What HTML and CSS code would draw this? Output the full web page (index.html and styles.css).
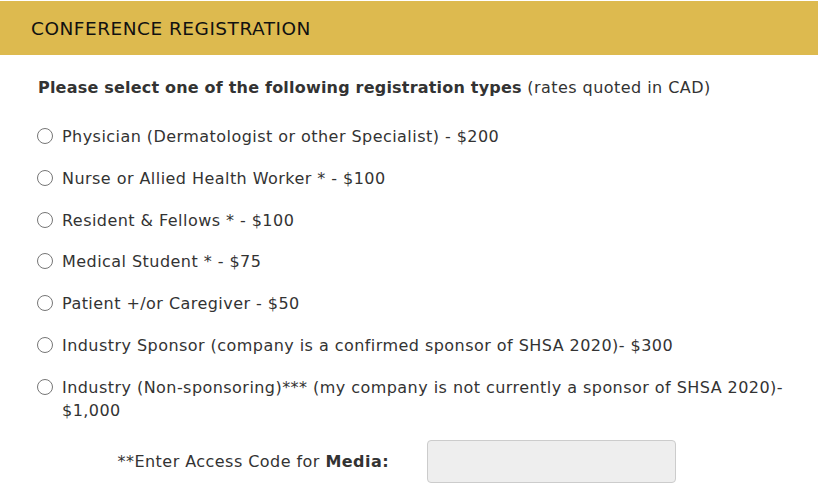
FILE: index.html
```html
<!DOCTYPE html>
<html lang="en">
<head>
    <meta charset="UTF-8">
    <meta name="viewport" content="width=device-width, initial-scale=1.0">
    <title>Conference Registration</title>
    <link rel="stylesheet" href="styles.css">
</head>
<body>
    <header class="panel-heading">
        <h2>CONFERENCE REGISTRATION</h2>
    </header>

    <div class="panel-body">
        <p class="intro"><strong>Please select one of the following registration types</strong> (rates quoted in CAD)</p>

        <!-- Registration types -->
        <div class="radio-list">
            <label class="radio-item"><input type="radio" name="regtype" value="physician"><span>Physician (Dermatologist or other Specialist) - $200</span></label>
            <label class="radio-item"><input type="radio" name="regtype" value="nurse"><span>Nurse or Allied Health Worker * - $100</span></label>
            <label class="radio-item"><input type="radio" name="regtype" value="resident"><span>Resident &amp; Fellows * - $100</span></label>
            <label class="radio-item"><input type="radio" name="regtype" value="student"><span>Medical Student * - $75</span></label>
            <label class="radio-item"><input type="radio" name="regtype" value="patient"><span>Patient +/or Caregiver - $50</span></label>
            <label class="radio-item"><input type="radio" name="regtype" value="sponsor"><span>Industry Sponsor (company is a confirmed sponsor of SHSA 2020)- $300</span></label>
            <label class="radio-item"><input type="radio" name="regtype" value="industry"><span>Industry (Non-sponsoring)*** (my company is not currently a sponsor of SHSA 2020)- $1,000</span></label>
        </div>

        <!-- Media access code -->
        <div class="access-row">
            <label for="media-code" class="access-label">**Enter Access Code for <strong>Media:</strong></label>
            <input type="text" id="media-code" class="access-input">
        </div>
    </div>
</body>
</html>
```

FILE: styles.css
```css
body {
    font-family: "DejaVu Sans", Verdana, sans-serif;
    font-size: 16px;
    letter-spacing: 0.45px;
    color: #333;
    background-color: white;
    margin: 0;
    padding: 0;
}

.panel-heading {
    background-color: #ddba4f;
    margin-top: 1px;
    height: 54px;
    display: flex;
    align-items: center;
    padding: 0 31px;
}

.panel-heading h2 {
    margin: 0;
    font-size: 18.5px;
    letter-spacing: 0.5px;
    font-weight: normal;
    color: #111;
}

.panel-body {
    padding: 22px 15px 0 38px;
}

.intro {
    margin: 0 0 26px 0;
    line-height: 22px;
}

.intro strong {
    letter-spacing: 0.2px;
}

.radio-list {
    display: flex;
    flex-direction: column;
    gap: 18.8px;
}

.radio-item {
    display: flex;
    align-items: flex-start;
    line-height: 23px;
}

.radio-item input {
    margin: 3px 9px 0 -1px;
    width: 16px;
    height: 16px;
    flex-shrink: 0;
}

.access-row {
    display: flex;
    align-items: center;
    margin-top: 18px;
}

.access-label {
    width: 389px;
    text-align: right;
    padding-right: 38px;
    box-sizing: border-box;
}

.access-input {
    width: 249px;
    height: 43px;
    box-sizing: border-box;
    background-color: #eee;
    border: 1px solid #ccc;
    border-radius: 4px;
}
```
